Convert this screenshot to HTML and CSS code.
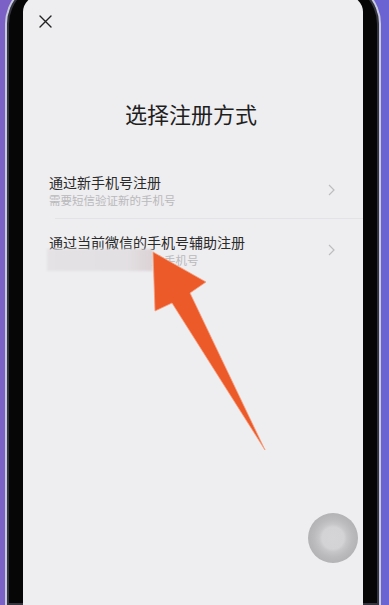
FILE: index.html
```html
<!DOCTYPE html>
<html lang="zh-CN">
<head>
    <meta charset="UTF-8">
    <meta name="viewport" content="width=device-width, initial-scale=1.0">
    <title>选择注册方式</title>
    <link rel="stylesheet" href="styles.css">
</head>
<body>
    <div class="phone">
        <div class="screen">
            <div class="topbar">
                <button class="close-btn" aria-label="关闭">
                    <svg width="13" height="13" viewBox="0 0 13 13">
                        <path d="M1 1L12 12M12 1L1 12" stroke="#222" stroke-width="1.4" stroke-linecap="round"/>
                    </svg>
                </button>
            </div>

            <h1 class="title">选择注册方式</h1>

            <ul class="options">
                <li class="option">
                    <div class="option-text">
                        <div class="option-title">通过新手机号注册</div>
                        <div class="option-desc">需要短信验证新的手机号</div>
                    </div>
                    <svg class="chevron" width="7" height="12" viewBox="0 0 7 12">
                        <path d="M1 1L6 6L1 11" fill="none" stroke="#bdbdbf" stroke-width="1.2"/>
                    </svg>
                </li>
                <li class="divider"></li>
                <li class="option">
                    <div class="option-text">
                        <div class="option-title">通过当前微信的手机号辅助注册</div>
                        <div class="option-desc">
                            使用当前微信号绑定的手机号
                            <span class="mask"></span>
                        </div>
                    </div>
                    <svg class="chevron" width="7" height="12" viewBox="0 0 7 12">
                        <path d="M1 1L6 6L1 11" fill="none" stroke="#bdbdbf" stroke-width="1.2"/>
                    </svg>
                </li>
            </ul>

            <!-- annotation arrow drawn over the page -->
            <svg class="arrow" width="340" height="600" viewBox="0 0 340 600">
                <path d="M130 256 L183 286 L167 297 L242 454 L149 307 L132 315 Z" fill="#ec5a2a" stroke="#f6a07e" stroke-width="0.8" stroke-linejoin="round"/>
            </svg>

            <div class="assist-btn"></div>
        </div>
    </div>
</body>
</html>
```

FILE: styles.css
```css
* {
    margin: 0;
    padding: 0;
    box-sizing: border-box;
}

html, body {
    height: 605px;
    overflow: hidden;
}

body {
    background: linear-gradient(90deg, #7b61c6 0%, #7463cc 50%, #6a63d2 100%);
    font-family: "Noto Sans CJK SC", "Noto Sans", sans-serif;
}

.phone {
    display: flex;
    flex-direction: column;
    width: 376px;
    height: 625px;
    margin: -20px 0 0 5px;
    padding: 14px 16px 0 16px;
    background: #060606;
    border: 2px solid #c8cae0;
    border-bottom: none;
    border-radius: 44px 44px 0 0;
    box-shadow: inset 0 0 0 2px #34353f;
}

.screen {
    position: relative;
    flex: 1;
    background: #eeedf0;
    border-radius: 16px 16px 0 0;
}

.topbar {
    padding: 19px 0 0 16px;
}

.close-btn {
    display: block;
    width: 13px;
    height: 13px;
    border: none;
    background: none;
}

.close-btn svg {
    display: block;
}

.title {
    margin-top: 70px;
    padding-right: 4px;
    font-size: 22px;
    line-height: 30px;
    font-weight: 400;
    color: #1e1e1e;
    text-align: center;
}

.options {
    list-style: none;
    margin-top: 31px;
}

.option {
    display: flex;
    align-items: center;
    justify-content: space-between;
    padding: 13px 28px 10px 26px;
}

.option-title {
    font-size: 14px;
    line-height: 20px;
    color: #2a2a2a;
}

.option-desc {
    position: relative;
    font-size: 11.5px;
    line-height: 16px;
    color: #b9b9bb;
}

.mask {
    position: absolute;
    left: -2px;
    top: -3px;
    width: 106px;
    height: 22px;
    background: linear-gradient(90deg, #e4e2e5 0%, #e3e0e3 75%, #dbd2d4 100%);
    filter: blur(1px);
}

.chevron {
    display: block;
}

.divider {
    height: 1px;
    margin-left: 32px;
    background: #e3e2e6;
}

.arrow {
    position: absolute;
    left: 0;
    top: 0;
    pointer-events: none;
}

.assist-btn {
    position: absolute;
    left: 285px;
    top: 517px;
    width: 50px;
    height: 50px;
    border-radius: 50%;
    background: radial-gradient(circle, #d5d5d8 0, #d3d3d6 11px, #c6c6c9 14px, #bbbbbe 19px, #b3b3b6 25px);
}
```
